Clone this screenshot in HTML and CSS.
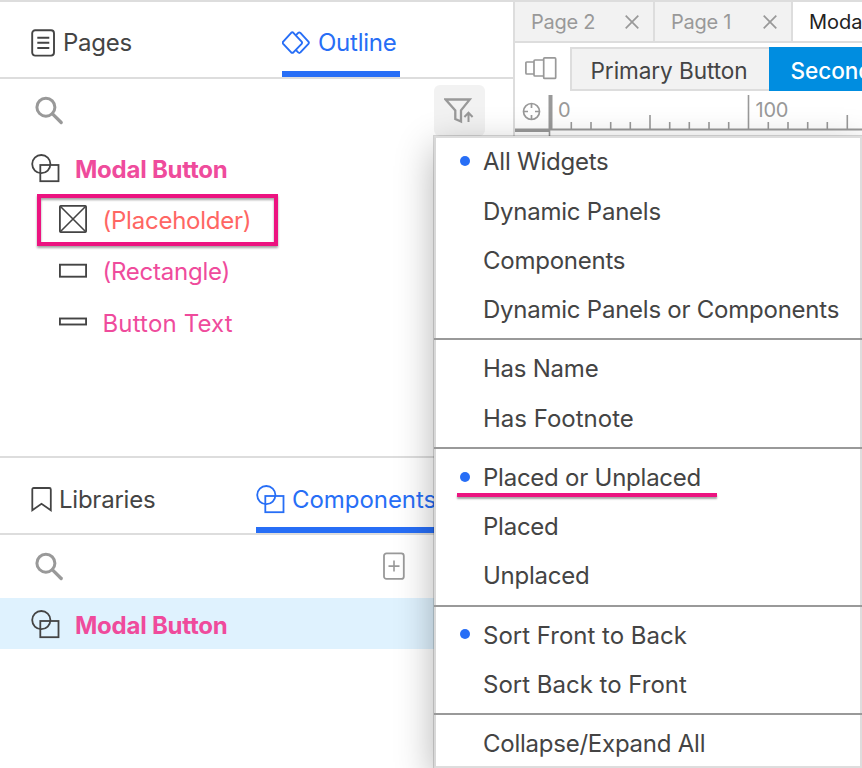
FILE: index.html
```html
<!DOCTYPE html>
<html lang="en">
<head>
<meta charset="utf-8">
<title>Outline</title>
<link rel="stylesheet" href="styles.css">
</head>
<body>
<svg class="defs" width="0" height="0">
  <symbol id="component" viewBox="0 0 29 29"><g fill="none" stroke="currentColor" stroke-width="1.8"><circle cx="10.3" cy="10.1" r="9.1"/><rect x="9.3" y="11" width="18.2" height="16.2"/></g></symbol>
  <symbol id="search" viewBox="0 0 30 30"><g fill="none" stroke="#999" stroke-width="3"><circle cx="11.9" cy="11.2" r="9"/><path d="M18.5 17.8 27.2 26.5" stroke-width="3.3" stroke-linecap="round"/></g></symbol>
</svg>
<div class="app">
  <aside class="sidebar">
    <section class="outline">
      <nav class="tabs">
        <div class="tab tab-pages"><svg width="24" height="28" viewBox="0 0 24 28" fill="none" stroke="#444" stroke-width="1.9"><rect x="1.2" y="1.3" width="21.8" height="25.3" rx="3"/><path d="M6.3 8.8h12M6.3 13.8h12M6.3 19h12"/></svg><span>Pages</span></div>
        <div class="tab tab-outline active"><svg width="28" height="24" viewBox="0 0 28 24" fill="none" stroke="currentColor" stroke-width="1.9" stroke-linejoin="round"><path d="M9.2 1.8Q10.3.8 11.4 1.8L19.6 10.6Q20.5 11.7 19.6 12.8L11.4 21.4Q10.3 22.3 9.2 21.4L1.2 12.8Q.3 11.7 1.2 10.6Z"/><path d="M14 4.2 16.2 1.9Q17.3.9 18.4 1.9L26.4 10.6Q27.3 11.7 26.4 12.8L18.4 21.4Q17.3 22.4 16.2 21.4L14 19.1"/></svg><span>Outline</span></div>
      </nav>
      <div class="tools">
        <svg class="search" width="30" height="30"><use href="#search"/></svg>
        <div class="filter"><svg width="30" height="26" viewBox="0 0 30 26" fill="none" stroke="#999" stroke-width="2.3"><path d="M1.6 1.5H25.8L17 12.4V23.5L11.3 21V12.4Z"/><path d="M24.5 24V15.2M20.4 19 24.5 14.8 28.6 19" stroke-width="2"/></svg></div>
      </div>
      <div class="tree">
        <div class="node root"><svg width="29" height="29"><use href="#component"/></svg><span>Modal Button</span></div>
        <div class="node child placeholder"><svg width="28" height="28" viewBox="0 0 28 28" fill="none" stroke="#444" stroke-width="1.8"><rect x=".9" y=".9" width="26.2" height="26.2" rx="1"/><path d="M1 1 27 27M27 1 1 27" stroke-width="1.6"/></svg><span>(Placeholder)</span></div>
        <div class="node child"><svg width="28" height="28" viewBox="0 0 28 28" fill="none" stroke="#444" stroke-width="1.9"><rect x=".9" y="8.7" width="26.2" height="12"/></svg><span>(Rectangle)</span></div>
        <div class="node child wide"><svg width="28" height="28" viewBox="0 0 28 28" fill="none" stroke="#444" stroke-width="1.9"><rect x=".9" y="11.5" width="26.2" height="6"/></svg><span>Button Text</span></div>
      </div>
    </section>
    <section class="library">
      <nav class="tabs">
        <div class="tab tab-libraries"><svg width="21" height="25" viewBox="0 0 21 25" fill="none" stroke="#444" stroke-width="1.8"><path d="M1.3 23.2V2.5Q1.3 1 2.8 1H18.3Q19.8 1 19.8 2.5V23.2L10.5 16.8Z"/></svg><span>Libraries</span></div>
        <div class="tab tab-components active"><svg width="29" height="29"><use href="#component"/></svg><span>Components</span></div>
      </nav>
      <div class="tools">
        <svg class="search" width="30" height="30"><use href="#search"/></svg>
        <svg class="add" width="22" height="28" viewBox="0 0 22 28" fill="none" stroke="#999" stroke-width="1.8"><rect x="1" y="1.3" width="19.8" height="25.6" rx="2.5"/><path d="M5.5 14.1h11M11 8.6v11" stroke-width="1.6"/></svg>
      </div>
      <div class="node root selected"><svg width="29" height="29"><use href="#component"/></svg><span>Modal Button</span></div>
    </section>
  </aside>
  <main class="canvas">
    <div class="pages">
      <div class="page"><span>Page 2</span><svg width="14" height="14" viewBox="0 0 14 14" stroke="#999" stroke-width="1.7"><path d="M.7.7 13.3 13.3M13.3.7.7 13.3"/></svg></div>
      <div class="page"><span>Page 1</span><svg width="14" height="14" viewBox="0 0 14 14" stroke="#999" stroke-width="1.7"><path d="M.7.7 13.3 13.3M13.3.7.7 13.3"/></svg></div>
      <div class="page current"><span>Modal Button</span></div>
    </div>
    <div class="states">
      <svg width="32" height="23" viewBox="0 0 32 23" fill="none" stroke="#999" stroke-width="1.7"><rect x="18.7" y=".9" width="12" height="20.5" rx="1"/><path d="M18.5 3H10Q9 3 9 4V18Q9 19 10 19H18.5M9 5H1.8Q.9 5 .9 6V16Q.9 17 1.8 17H9"/></svg>
      <div class="state">Primary Button</div>
      <div class="state on">Secondary Button</div>
    </div>
    <svg class="ruler" width="347" height="45" viewBox="515 91 347 45" fill="none" stroke="#999">
      <circle cx="531.5" cy="111.5" r="8" stroke-width="1.7"/>
      <path stroke-width="1.7" d="M531.5 103v5M531.5 115v5M523 111.5h5M535 111.5h5"/>
      <path stroke-width="4" d="M550.5 95V130"/>
      <path stroke-width="2" d="M515 129.4H862"/>
      <path stroke-width="3" d="M515 130.4H550"/>
      <path stroke-width="1.6" d="M549.5 130v6M571.3 122v7M591 122v7M610.7 122v7M630.3 122v7M650 115v14M669.7 122v7M689.3 122v7M709 122v7M728.7 122v7M748.5 95v34M768.3 122v7M788 122v7M807.7 122v7M827.3 122v7M847.3 115v14"/>
      <text class="mark" x="558" y="116.6">0</text><text class="mark" x="755.5" y="116.6">100</text>
    </svg>
  </main>
  <div class="menu">
    <div class="item checked"><span>All Widgets</span></div>
    <div class="item"><span>Dynamic Panels</span></div>
    <div class="item"><span>Components</span></div>
    <div class="item"><span>Dynamic Panels or Components</span></div>
    <hr>
    <div class="item"><span>Has Name</span></div>
    <div class="item loose"><span>Has Footnote</span></div>
    <hr>
    <div class="item checked marked"><span>Placed or Unplaced</span></div>
    <div class="item"><span>Placed</span></div>
    <div class="item"><span>Unplaced</span></div>
    <hr>
    <div class="item checked loose"><span>Sort Front to Back</span></div>
    <div class="item loose"><span>Sort Back to Front</span></div>
    <hr>
    <div class="item"><span>Collapse/Expand All</span></div>
  </div>
</div>
</body>
</html>
```
FILE: styles.css
```css
*, *::before, *::after { box-sizing: border-box; }
body { margin: 0; background: #fff; font-family: Inter, sans-serif; font-size: 24px; letter-spacing: -.24px; color: #444; }
.defs { position: absolute; }
svg { flex: none; display: block; }
.app { position: relative; display: flex; width: 862px; height: 768px; overflow: hidden; border-top: 2px solid #ddd; white-space: nowrap; }

.sidebar { width: 515px; flex: none; border-right: 2px solid #ddd; }
.outline { height: 456px; border-bottom: 2px solid #ddd; }
.tabs { display: flex; height: 77px; border-bottom: 2px solid #ddd; padding-left: 31px; }
.tab { display: flex; align-items: center; height: 75px; padding-top: 7px; }
.tab.active { color: #276ef6; border-bottom: 6px solid #276ef6; padding-top: 13px; }
.outline .tab span { margin-top: -2px; }
.tab-pages { width: 251px; gap: 8px; }
.tab-outline { width: 118px; gap: 8px; }
.tab-libraries { width: 225px; gap: 7px; }
.tab-components { width: 190px; gap: 7px; letter-spacing: -.05px; }
.tools { display: flex; justify-content: space-between; padding-left: 34px; }
.outline .tools { height: 65px; padding-top: 6px; padding-right: 28px; }
.outline .search { margin-top: 11px; }
.filter { width: 51px; height: 51px; border-radius: 6px; background: #f2f2f2; padding: 13px 0 0 10px; }
.library .tools { height: 63px; padding-top: 17px; padding-right: 108px; }
.node { display: flex; align-items: center; height: 51.2px; padding-left: 31px; gap: 15px; color: #ef4b9c; }
.root { font-weight: 700; }
.root svg, .child svg { color: #444; }
.root svg { margin-top: -2px; }
.child { padding-left: 59px; gap: 15.5px; }
.child svg { margin-top: -4px; }
.wide { letter-spacing: .15px; }
.placeholder { color: #ff6663; position: relative; }
.placeholder::after { content: ""; position: absolute; left: 37px; top: -1.5px; width: 241px; height: 52px; border: 4px solid #ec1380; filter: drop-shadow(0 2px 1px rgba(0,0,0,.35)); }
.selected { background: #dff2fe; padding-top: 3px; }

.canvas { flex: 1; min-width: 0; overflow: hidden; }
.pages { display: flex; height: 41px; border-bottom: 2px solid #ddd; font-size: 20px; color: #999; }
.page { display: flex; align-items: center; justify-content: space-between; flex: none; width: 138px; padding: 1px 14px 0 16px; background: #f2f2f2; border-right: 2px solid #ddd; }
.page:first-child { width: 140px; }
.page.current { width: 160px; background: #fff; color: #222; letter-spacing: 0; }
.states { display: flex; height: 48px; padding: 4px 0 0 10px; }
.states > svg { margin: 10px 13px 0 0; }
.state { flex: none; width: 199px; height: 44px; border: 2px solid #ddd; border-right: 0; background: #f2f2f2; padding-left: 18.5px; font-size: 22.6px; letter-spacing: -.08px; line-height: 43px; }
.state.on { width: 230px; border: 0; background: #008de0; color: #fff; padding-left: 21.5px; line-height: 47px; font-weight: 500; }
.mark { font-size: 20px; fill: #999; stroke: none; }

.menu { position: absolute; left: 434px; top: 133.5px; width: 428px; height: 632.5px; border: 2px solid #ddd; border-left-color: #d8d8d8; background: #fff; box-shadow: 0 0 0 1px rgba(0,0,0,.15), 0 12px 36px rgba(0,0,0,.3); }
.item { position: relative; display: flex; align-items: center; height: 49.35px; padding-left: 47px; }
.item:first-child { margin-top: -.5px; }
.loose { letter-spacing: 0; }
.checked::before { content: ""; position: absolute; left: 23.5px; top: 19px; width: 10px; height: 10px; border-radius: 50%; background: #276ef6; }
.marked::after { content: ""; position: absolute; left: 21px; bottom: 4.5px; width: 260px; height: 4px; background: #ec1380; box-shadow: 0 2px 2px rgba(0,0,0,.35); }
.menu hr { height: 2px; margin: 3.9px -2px 3.9px; border: 0; background: #999; }
```
